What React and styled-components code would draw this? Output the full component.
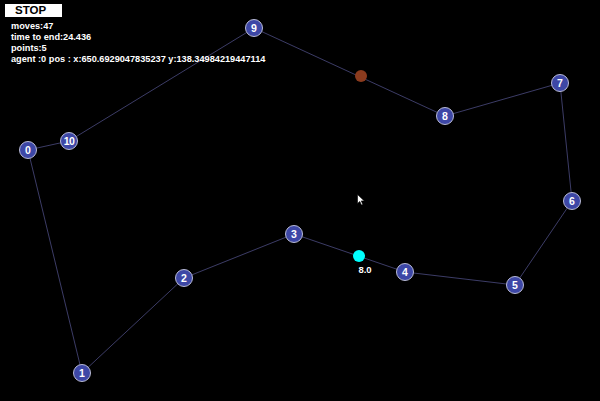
import React from "react";
import styled, { createGlobalStyle } from "styled-components";

const GlobalStyle = createGlobalStyle`
    html, body {
        margin: 0;
        padding: 0;
        background: #000;
    }
`;

const Stage = styled.div`
    position: relative;
    width: 600px;
    height: 401px;
    background: #000;
    overflow: hidden;
    font-family: "Liberation Sans", Arial, sans-serif;
`;

const Hud = styled.div`
    position: relative;
    z-index: 2;
    display: flex;
    flex-direction: column;
    align-items: flex-start;
    padding: 4px 0 0 5px;
`;

const StopButton = styled.button`
    width: 57px;
    height: 13px;
    margin: 0;
    padding: 0 0 0 10px;
    border: none;
    background: #fff;
    color: #000;
    font-family: "Liberation Sans", Arial, sans-serif;
    font-weight: bold;
    font-size: 11.5px;
    line-height: 13px;
    text-align: left;
`;

const Stats = styled.div`
    display: flex;
    flex-direction: column;
    margin: 3.5px 0 0 6px;
    color: #fff;
    font-weight: bold;
    font-size: 9.2px;
    line-height: 11.3px;
    white-space: nowrap;
`;

const Edges = styled.svg`
    position: absolute;
    left: 0;
    top: 0;
    width: 600px;
    height: 401px;
`;

const Node = styled.div`
    position: absolute;
    width: 16px;
    height: 16px;
    margin: -9px 0 0 -9px;
    border: 1px solid #b9bbd6;
    border-radius: 50%;
    background: #3d47a6;
    color: #fff;
    display: flex;
    align-items: center;
    justify-content: center;
    font-weight: bold;
    font-size: 10.5px;
    letter-spacing: ${(p) => (p.$wide ? "-0.6px" : "0")};
`;

const Dot = styled.div`
    position: absolute;
    width: 12px;
    height: 12px;
    margin: -6px 0 0 -6px;
    border-radius: 50%;
    background: ${(p) => p.$color};
`;

const DotLabel = styled.span`
    position: absolute;
    transform: translateX(-50%);
    color: #fff;
    font-weight: bold;
    font-size: 9.5px;
    line-height: 10px;
`;

const Cursor = styled.svg`
    position: absolute;
    width: 8px;
    height: 12px;
`;

const nodes = [
    { id: 0, x: 28, y: 150 },
    { id: 1, x: 82, y: 373 },
    { id: 2, x: 184, y: 278 },
    { id: 3, x: 294, y: 234 },
    { id: 4, x: 405, y: 272 },
    { id: 5, x: 515, y: 285 },
    { id: 6, x: 572, y: 201 },
    { id: 7, x: 560, y: 83 },
    { id: 8, x: 445, y: 116 },
    { id: 9, x: 254, y: 28 },
    { id: 10, x: 69, y: 141 },
];

const route = [0, 10, 9, 8, 7, 6, 5, 4, 3, 2, 1, 0];

const byId = (id) => nodes.find((n) => n.id === id);

const App = () => {
    return (
        <>
            <GlobalStyle />
            <Stage>
                <Edges viewBox="0 0 600 401">
                    {route.slice(1).map((id, i) => {
                        const a = byId(route[i]);
                        const b = byId(id);
                        return (
                            <line
                                key={i}
                                x1={a.x}
                                y1={a.y}
                                x2={b.x}
                                y2={b.y}
                                stroke="#3c3c66"
                                strokeWidth="1"
                            />
                        );
                    })}
                </Edges>
                <Hud>
                    <StopButton>STOP</StopButton>
                    <Stats>
                        <span>moves:47</span>
                        <span>time to end:24.436</span>
                        <span>points:5</span>
                        <span>agent :0 pos : x:650.6929047835237 y:138.34984219447114</span>
                    </Stats>
                </Hud>
                <Dot $color="#8b3b1e" style={{ left: 361, top: 76 }} />
                <Dot $color="#00ffff" style={{ left: 359, top: 256 }} />
                <DotLabel style={{ left: 365, top: 265 }}>8.0</DotLabel>
                {nodes.map((n) => (
                    <Node key={n.id} $wide={n.id > 9} style={{ left: n.x, top: n.y }}>
                        {n.id}
                    </Node>
                ))}
                <Cursor viewBox="0 0 8 12" style={{ left: 357, top: 194 }}>
                    <path d="M0.5 0.5 L0.5 9.5 L2.8 7.4 L4.4 11 L5.8 10.4 L4.3 6.9 L7.3 6.9 Z" fill="#fff" stroke="#000" strokeWidth="0.6" />
                </Cursor>
            </Stage>
        </>
    );
};

export default App;
